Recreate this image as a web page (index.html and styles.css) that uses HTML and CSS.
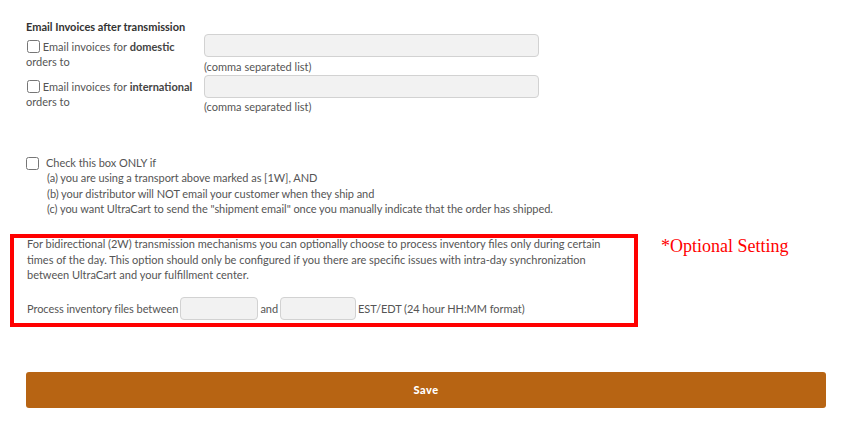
FILE: index.html
```html
<!DOCTYPE html>
<html lang="en">
<head>
    <meta charset="UTF-8">
    <meta name="viewport" content="width=device-width, initial-scale=1.0">
    <title>Fulfillment Settings</title>
    <link rel="stylesheet" href="styles.css">
</head>
<body>
    <div class="page">
        <!-- Email invoices section -->
        <h4 class="section-title">Email Invoices after transmission</h4>

        <div class="email-row">
            <label class="email-label"><input type="checkbox" class="small-check"> Email invoices for <b>domestic</b> orders to</label>
            <div class="email-field">
                <input type="text" class="text-input">
                <div class="hint">(comma separated list)</div>
            </div>
        </div>

        <div class="email-row">
            <label class="email-label"><input type="checkbox" class="small-check"> Email invoices for <b>international</b> orders to</label>
            <div class="email-field">
                <input type="text" class="text-input">
                <div class="hint">(comma separated list)</div>
            </div>
        </div>

        <!-- Shipment email checkbox -->
        <div class="ship-check">
            <input type="checkbox" class="round-check">
            <div class="ship-text">
                Check this box ONLY if<br>
                <span class="indent">(a) you are using a transport above marked as [1W], AND</span><br>
                <span class="indent">(b) your distributor will NOT email your customer when they ship and</span><br>
                <span class="indent">(c) you want UltraCart to send the "shipment email" once you manually indicate that the order has shipped.</span>
            </div>
        </div>

        <!-- Inventory time window -->
        <div class="inventory">
            <p class="inventory-text">For bidirectional (2W) transmission mechanisms you can optionally choose to process inventory files only during certain times of the day. This option should only be configured if you there are specific issues with intra-day synchronization between UltraCart and your fulfillment center.</p>
            <div class="time-row">
                Process inventory files between
                <input type="text" class="time-input">
                and
                <input type="text" class="time-input time-end">
                EST/EDT (24 hour HH:MM format)
            </div>
            <div class="annotation-box"></div>
            <span class="annotation-note">*Optional Setting</span>
        </div>

        <button class="save-btn">Save</button>
    </div>
</body>
</html>
```

FILE: styles.css
```css
* {
    margin: 0;
    padding: 0;
    box-sizing: border-box;
}

body {
    font-family: 'Lato', 'Open Sans', sans-serif;
    font-size: 11px;
    line-height: 15px;
    color: #555;
    background: #fff;
}

.page {
    padding: 19px 32px 0 26px;
}

.section-title {
    font-size: 11px;
    font-weight: bold;
    color: #333;
    line-height: 15px;
}

.email-row {
    display: flex;
    margin-bottom: 1px;
}

.email-label {
    width: 178px;
    padding-top: 4.5px;
}

.email-label b {
    font-weight: bold;
    color: #444;
}

.small-check {
    width: 13px;
    height: 13px;
    margin: 0 0 0 1px;
    vertical-align: -2px;
}

.email-field {
    width: 335px;
}

.text-input {
    display: block;
    width: 100%;
    height: 23px;
    background: #f2f2f2;
    border: 1px solid #d2d2d2;
    border-radius: 4px;
}

.hint {
    margin-top: 1.5px;
}

.ship-check {
    display: flex;
    margin-top: 41px;
}

.round-check {
    width: 13px;
    height: 13px;
    margin: 2px 7px 0 0;
}

.ship-text {
    line-height: 15.3px;
    letter-spacing: -0.05px;
}

.indent {
    margin-left: 1px;
}

.inventory {
    position: relative;
    margin-top: 20px;
    padding-left: 1px;
}

.inventory-text {
    width: 580px;
    line-height: 15.4px;
}

.time-row {
    display: flex;
    align-items: center;
    gap: 2px;
    margin-top: 14.5px;
    letter-spacing: -0.05px;
}

.time-input {
    width: 78px;
    height: 23px;
    background: #f2f2f2;
    border: 1px solid #d2d2d2;
    border-radius: 4px;
}

.time-end {
    width: 76px;
}

.annotation-box {
    position: absolute;
    left: -16px;
    top: -2px;
    width: 628px;
    height: 93px;
    border: 4px solid #ff0000;
}

.annotation-note {
    position: absolute;
    left: 635px;
    top: 0;
    font-family: 'Liberation Serif', 'Times New Roman', serif;
    font-size: 18px;
    line-height: 20px;
    color: #ff0000;
}

.save-btn {
    display: block;
    width: 800px;
    height: 36px;
    margin-top: 52px;
    background: #b76413;
    color: #fff;
    border: none;
    border-radius: 3px;
    font-family: 'Lato', sans-serif;
    font-size: 11px;
    font-weight: 900;
    letter-spacing: 0.5px;
    cursor: pointer;
}
```
